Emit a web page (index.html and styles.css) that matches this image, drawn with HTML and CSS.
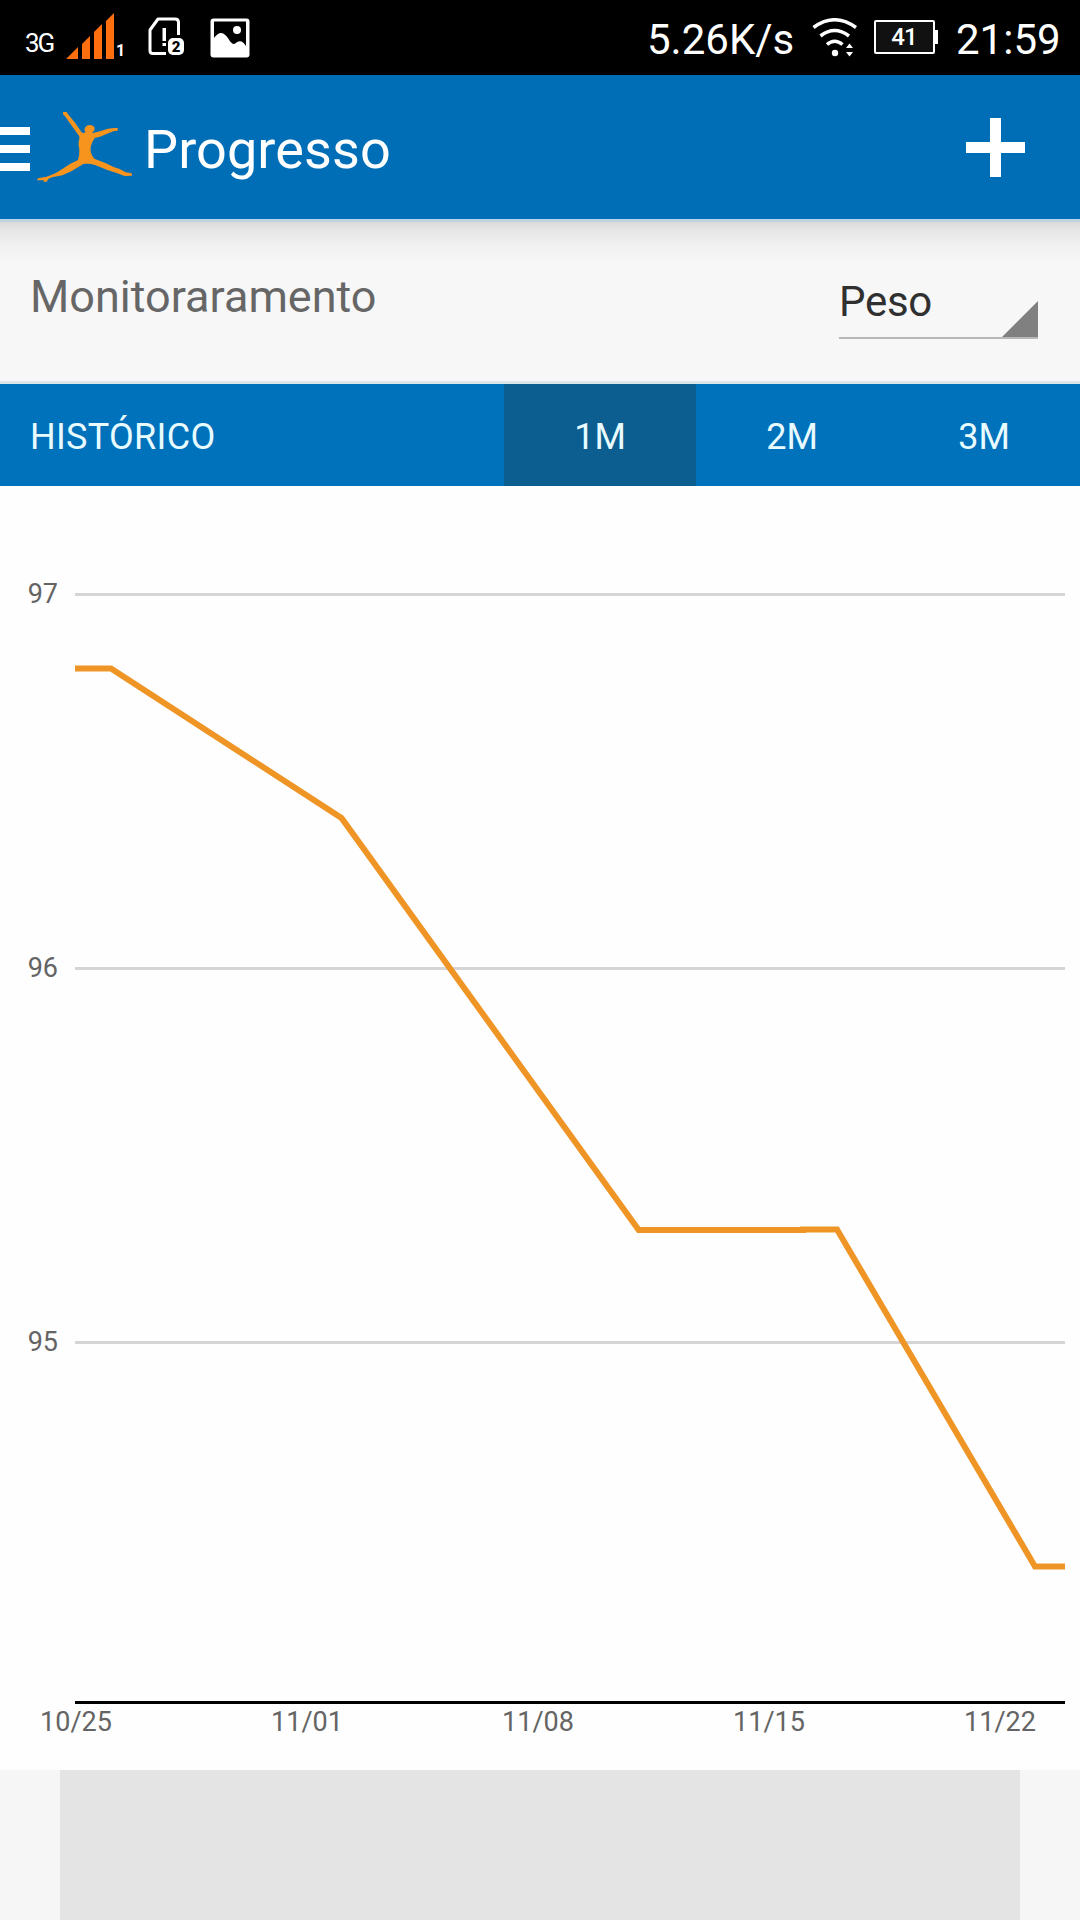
FILE: index.html
```html
<!DOCTYPE html>
<html lang="pt-BR">
<head>
  <meta charset="UTF-8">
  <meta name="viewport" content="width=device-width, initial-scale=1.0">
  <title>Progresso</title>
  <link rel="stylesheet" href="styles.css">
</head>
<body>
  <div class="status-bar">
    <span class="network">3G</span>
    <svg class="signal" width="50" height="48" viewBox="0 0 50 48">
      <path fill="#ff6f0f" d="M0 46L12 34V46ZM16 46V31L24 23V46ZM28 46V19L36 11V46ZM40 46V8L48 0V46Z"/>
    </svg>
    <span class="sim-number">1</span>
    <svg class="sim" width="38" height="40" viewBox="0 0 38 40">
      <path fill="none" stroke="#fff" stroke-width="3" stroke-linejoin="round" d="M18 36.500H5Q2 36.500 2 33.500V13L10 2H27Q30.500 2 30.500 5.500V18"/>
      <path fill="#fff" d="M14.500 11h3.500v13h-3.500zM14.500 26h3.500v3h-3.500z"/>
      <rect x="20" y="21" width="16" height="17" rx="5" fill="#fff"/>
      <text x="28" y="34.500" text-anchor="middle" class="sim-badge">2</text>
    </svg>
    <svg class="picture" width="40" height="40" viewBox="0 0 40 40">
      <rect x="0.500" y="0.500" width="39" height="39" rx="3" fill="#fff"/>
      <path fill="#000" d="M4 3.500H36V28C33 23 30 22 26.500 24.500C24 27 22 26 19.500 22.500C16 17 13 14 9 15.500C7 16.500 5.500 18 4 20Z"/>
      <circle cx="27" cy="12" r="4" fill="#fff"/>
    </svg>
    <span class="speed">5.26K/s</span>
    <svg class="wifi" width="46" height="40" viewBox="0 0 46 40">
      <g fill="none" stroke="#fff" stroke-width="3.500">
        <path d="M1.500 9.500Q22.500 -6 44 9.500"/>
        <path d="M8.500 18Q22.500 7 37 18"/>
        <path d="M15 26.500Q22.500 20 30.500 26.500"/>
      </g>
      <circle cx="23" cy="35" r="3.200" fill="#fff"/>
      <path fill="#fff" d="M34 30L37.500 25.500L41 30ZM34 34H41L37.500 38.500Z"/>
    </svg>
    <div class="battery">41</div>
    <span class="clock">21:59</span>
  </div>

  <div class="action-bar">
    <svg class="menu" width="30" height="44" viewBox="0 0 30 44">
      <path fill="#fff" d="M0 0h30v8H0zM0 18h30v8H0zM0 36h30v8H0z"/>
    </svg>
    <svg class="logo" width="104" height="82" viewBox="0 0 312 246">
      <path fill="#f7941e" d="M87 18L98 18L102 25L122 49L144 80L150 81L155 77L151 72Q153 58 166 57Q181 57 182 68Q181 76 174 80L177 81L198 76L222 68L241 66L251 66L251 74L240 75L219 83L198 92L182 96Q175 105 170 123Q167 143 181 158L216 172L239 183L257 189L275 199L293 202L294 209L272 210L250 202L220 192L185 178L168 173L149 173L112 196L85 208L54 214L43 219L38 227L28 227L30 223L9 223L12 217L38 212L64 202L85 189L109 173L132 162Q137 148 136 130Q131 111 136 99L136 91L118 66L93 31L87 25Z"/>
    </svg>
    <h1>Progresso</h1>
    <svg class="add" width="59" height="59" viewBox="0 0 59 59">
      <path fill="#fff" d="M24 0h11v24h24v11H35v24H24V35H0V24h24z"/>
    </svg>
  </div>

  <div class="tracking">
    <span class="tracking-label">Monitoraramento</span>
    <div class="spinner">
      <span>Peso</span>
      <svg width="36" height="36" viewBox="0 0 36 36"><path fill="#808080" d="M36 0V36H0Z"/></svg>
    </div>
  </div>

  <div class="tabs">
    <div class="tabs-title">HISTÓRICO</div>
    <div class="tab active">1M</div>
    <div class="tab">2M</div>
    <div class="tab">3M</div>
  </div>

  <svg class="chart" width="1080" height="1284" viewBox="0 486 1080 1284">
    <g class="grid">
      <path d="M75 594.500H1065"/>
      <path d="M75 968.500H1065"/>
      <path d="M75 1342.500H1065"/>
    </g>
    <path class="axis" d="M75 1702.500H1065"/>
    <path class="line" d="M75 668.500H111L341.500 818L638.700 1230H803V1229.500H837L1035 1566.500H1065"/>
    <g class="y-labels">
      <text x="58" y="603">97</text>
      <text x="58" y="977">96</text>
      <text x="58" y="1351">95</text>
    </g>
    <g class="x-labels">
      <text x="76" y="1731">10/25</text>
      <text x="307" y="1731">11/01</text>
      <text x="538" y="1731">11/08</text>
      <text x="769" y="1731">11/15</text>
      <text x="1000" y="1731">11/22</text>
    </g>
  </svg>

  <div class="bottom">
    <div class="ad"></div>
  </div>
</body>
</html>
```
FILE: styles.css
```css
* {
  box-sizing: border-box;
}
body {
  margin: 0;
  width: 1080px;
  height: 1920px;
  display: flex;
  flex-direction: column;
  overflow: hidden;
  background: #fefefe;
  font-family: Roboto, "Noto Sans", sans-serif;
}
svg {
  flex: none;
  display: block;
}
.status-bar {
  height: 75px;
  display: flex;
  align-items: flex-start;
  background: #000;
  color: #fff;
  white-space: nowrap;
}
.network {
  width: 41px;
  margin-top: 28px;
  padding-left: 25px;
  font-size: 26px;
  line-height: 30px;
  font-weight: 400;
  letter-spacing: -2px;
}
.signal {
  margin: 13px 0 0 25px;
}
.sim-number {
  width: 10px;
  margin: 42px 0 0 0;
  font-size: 16px;
  line-height: 18px;
  font-weight: 700;
}
.sim {
  margin: 17px 0 0 22px;
}
.sim-badge {
  font-size: 15px;
  font-weight: 900;
}
.picture {
  margin: 18px 0 0 24px;
}
.speed, .clock {
  margin-top: 15px;
  font-size: 42px;
  line-height: 50px;
}
.speed {
  width: 148px;
  margin-left: 397px;
}
.wifi {
  margin: 18px 0 0 17px;
}
.battery {
  position: relative;
  width: 61px;
  height: 34px;
  margin: 20px 0 0 16px;
  border: 2px solid #fff;
  border-radius: 2px;
  background: #111;
  font-size: 24px;
  line-height: 31px;
  font-weight: 500;
  letter-spacing: -1px;
  text-align: center;
  padding-right: 1px;
}
.battery::after {
  content: "";
  position: absolute;
  right: -5px;
  top: 8px;
  width: 3px;
  height: 14px;
  background: #fff;
}
.clock {
  margin-left: 21px;
}
.action-bar {
  height: 144px;
  display: flex;
  align-items: center;
  background: #006eb7;
}
.menu {
  margin-top: 4px;
}
.logo {
  margin-left: 4px;
}
.action-bar h1 {
  flex: 1;
  margin: 0;
  padding: 5px 0 0 6px;
  color: #fff;
  font-size: 54px;
  font-weight: 400;
  letter-spacing: 0.1px;
}
.add {
  margin-right: 55px;
}
.tracking {
  height: 165px;
  display: flex;
  justify-content: space-between;
  padding: 0 42px 0 30px;
  border-top: 3px solid #bcd3e2;
  border-bottom: 3px solid #dde6eb;
  background: linear-gradient(#dadada, #e6e6e6 8px, #f0f0f0 22px, #f7f7f7 42px);
}
.tracking-label {
  margin-top: 45px;
  color: #666;
  font-size: 45px;
  line-height: 60px;
}
.spinner {
  width: 199px;
  height: 117px;
  display: flex;
  justify-content: space-between;
  align-items: flex-end;
  border-bottom: 2px solid #b8b8b8;
  color: #303030;
  font-size: 42px;
  line-height: 50px;
}
.spinner span {
  margin-bottom: 10px;
  letter-spacing: -0.3px;
}
.tabs {
  height: 102px;
  display: flex;
  line-height: 106px;
  background: #0072bc;
  color: #e8fbff;
  font-size: 36px;
}
.tabs-title {
  flex: 1;
  padding-left: 30px;
  letter-spacing: 0.3px;
}
.tab {
  width: 192px;
  text-align: center;
}
.tab.active {
  background: #0d5e90;
}
.grid {
  stroke: #d5d5d5;
  stroke-width: 3;
}
.axis {
  stroke: #000;
  stroke-width: 3;
}
.line {
  fill: none;
  stroke: #ef9526;
  stroke-width: 6;
}
.y-labels, .x-labels {
  fill: #646464;
  font-size: 27px;
}
.y-labels {
  text-anchor: end;
}
.x-labels {
  text-anchor: middle;
}
.bottom {
  flex: 1;
  padding: 0 60px;
  background: #f6f6f6;
}
.ad {
  height: 100%;
  background: #e4e4e4;
}
```
